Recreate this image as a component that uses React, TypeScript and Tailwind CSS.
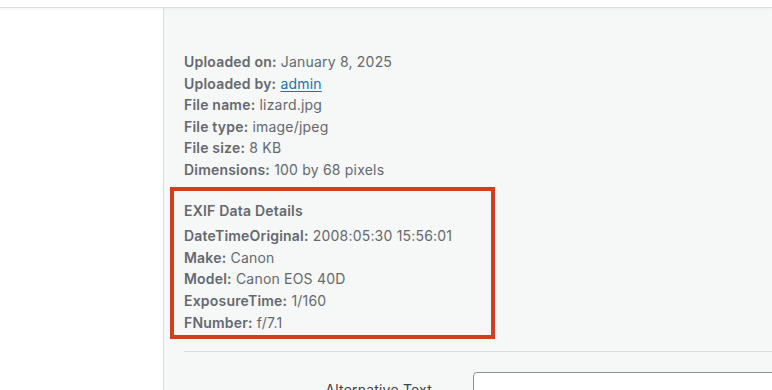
import React from 'react';

const fileInfo: [string, React.ReactNode][] = [
  ['Uploaded on:', 'January 8, 2025'],
  ['Uploaded by:', <a href="#" className="text-[#2271b1] underline underline-offset-2">admin</a>],
  ['File name:', 'lizard.jpg'],
  ['File type:', 'image/jpeg'],
  ['File size:', '8 KB'],
  ['Dimensions:', '100 by 68 pixels'],
];

const exif: [string, string][] = [
  ['DateTimeOriginal:', '2008:05:30 15:56:01'],
  ['Make:', 'Canon'],
  ['Model:', 'Canon EOS 40D'],
  ['ExposureTime:', '1/160'],
  ['FNumber:', 'f/7.1'],
];

function Row({ label, value }: { label: string; value: React.ReactNode }) {
  return (
    <div className="leading-[21.6px] whitespace-nowrap">
      <strong className="font-semibold">{label}</strong> {value}
    </div>
  );
}

export default function App() {
  return (
    <div className="w-[772px] h-[390px] overflow-hidden bg-white flex flex-col text-[14px] tracking-[0.2px] proportional-nums text-[#646970] font-['Inter','Liberation_Sans',sans-serif]">
      <div className="h-[8px] shrink-0 bg-white border-b border-[#dcdcde] shadow-[0_1px_3px_rgba(0,0,0,0.06)] relative z-10" />
      <div className="flex flex-1 min-h-0">
        <div className="w-[164px] shrink-0 bg-white border-r border-[#dcdcde]" />
        <div className="flex-1 bg-[#f6f7f7] pl-5 pt-[43px] min-w-0">
          <div>
            {fileInfo.map(([l, v]) => (
              <Row key={l} label={l} value={v} />
            ))}
          </div>

          <div className="mt-[6px] -ml-[14px] w-[325px] border-4 border-[#d63c1e] pl-[10px] pt-[9px] pb-[2px]">
            <div className="font-semibold leading-[21.6px] mb-[4px]">EXIF Data Details</div>
            {exif.map(([l, v]) => (
              <Row key={l} label={l} value={v} />
            ))}
          </div>

          <div className="mt-[12px] border-t border-[#dcdcde] -mr-5" />

          <div className="mt-[20px] flex items-start gap-[41px]">
            <div className="w-[248px] text-right pt-[7px] leading-[21.6px] text-[#3c434a]">Alternative Text</div>
            <div className="flex-1 h-[34px] bg-white border border-[#8c8f94] rounded-[4px] -mr-5" />
          </div>
        </div>
      </div>
    </div>
  );
}
